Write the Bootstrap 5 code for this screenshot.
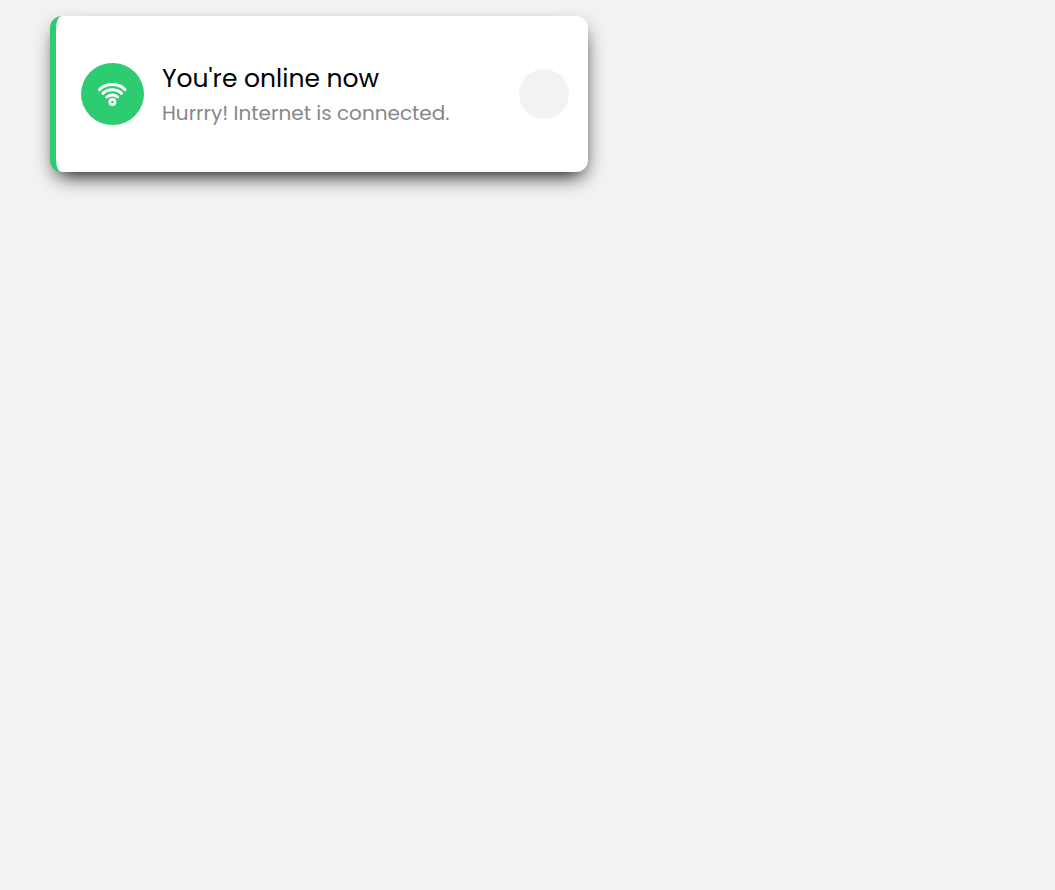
<!DOCTYPE html>
<html lang="en">
<head>
<meta charset="utf-8">
<meta name="viewport" content="width=device-width, initial-scale=1">
<title>Connection status</title>
<link href="https://cdn.jsdelivr.net/npm/bootstrap@5.3.0/dist/css/bootstrap.min.css" rel="stylesheet">
<style>
  body { background: #f2f2f2; font-family: "Poppins", "Open Sans", sans-serif; }
  .page { padding: 16px 50px; }
  .notice {
    max-width: 538px;
    padding: 40px 19px 40px 25px;
    border-left: 6px solid #2ecc71;
    border-radius: 12px;
    box-shadow: 1px 9px 20px -6px #000;
  }
  .notice-icon { width: 63px; height: 62px; background: #2ecc71; }
  .notice-body { margin-left: 18px; }
  .notice-title { font-size: 25px; line-height: 38px; color: #000; }
  .notice-text { font-size: 20px; line-height: 30px; color: #878787; }
  .notice-close { width: 50px; height: 50px; background: #f2f2f2; }
</style>
</head>
<body>
<main class="page min-vh-100">
  <div class="notice bg-white d-flex align-items-center" role="status">
    <div class="notice-icon rounded-circle d-flex align-items-center justify-content-center flex-shrink-0">
      <svg width="31" height="24" viewBox="0 0 31 24" fill="none" stroke="#fff" stroke-width="3" stroke-linecap="round" aria-hidden="true">
        <path d="M2.500 7.600C9 .9 21.500 .9 28 7.600"/>
        <path d="M6 11.300C11 6.600 19.500 6.600 24.500 11.300"/>
        <path d="M9.800 15C12.900 12.200 17.600 12.200 20.700 15"/>
        <circle cx="15.400" cy="20" r="2.600" stroke-width="2.700"/>
      </svg>
    </div>
    <div class="notice-body d-flex flex-column py-1">
      <span class="notice-title">You're online now</span>
      <p class="notice-text mb-0">Hurrry! Internet is connected.</p>
    </div>
    <button type="button" class="notice-close btn rounded-circle border-0 p-0 ms-auto flex-shrink-0" aria-label="Close"></button>
  </div>
</main>
<script src="https://cdn.jsdelivr.net/npm/bootstrap@5.3.0/dist/js/bootstrap.bundle.min.js"></script>
</body>
</html>
